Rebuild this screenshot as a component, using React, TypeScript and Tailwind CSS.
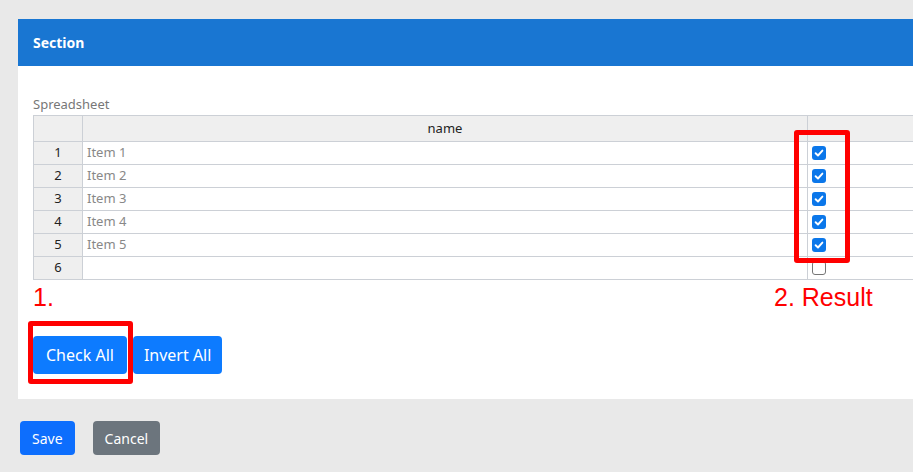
import React from 'react';

const ROWS = [
  { id: 1, name: 'Item 1', checked: true },
  { id: 2, name: 'Item 2', checked: true },
  { id: 3, name: 'Item 3', checked: true },
  { id: 4, name: 'Item 4', checked: true },
  { id: 5, name: 'Item 5', checked: true },
  { id: 6, name: '', checked: false },
];

const Check = ({ checked }: { checked: boolean }) =>
  checked ? (
    <span className="flex h-[14px] w-[14px] items-center justify-center rounded-[3px] bg-[#0b77ea]">
      <svg width="10" height="10" viewBox="0 0 10 10">
        <path d="M1.6 5.2 L4 7.5 L8.4 2.6" fill="none" stroke="white" strokeWidth="1.9" strokeLinecap="round" strokeLinejoin="round" />
      </svg>
    </span>
  ) : (
    <span className="block h-[14px] w-[14px] rounded-[3px] border border-[#767676] bg-white" />
  );

export default function App() {
  return (
    <div
      className="relative h-[472px] w-[913px] overflow-hidden bg-[#e9e9e9]"
      style={{ fontFamily: '"Noto Sans", sans-serif' }}
    >
      <div className="pt-[19px] pl-[18px]">
        {/* Section panel */}
        <div className="w-[940px] bg-white">
          <div className="flex h-[47px] items-center bg-[#1976d2] px-[15px] text-[14px] font-bold text-white">
            Section
          </div>
          <div className="px-[15px] pt-[28px] pb-[25px]">
            <div className="h-[21px] text-[13px] leading-[21px] text-[#777]">Spreadsheet</div>
            <table className="w-[900px] table-fixed border-collapse text-[13px]">
              <colgroup>
                <col className="w-[49px]" />
                <col className="w-[725px]" />
                <col />
              </colgroup>
              <thead>
                <tr className="h-[26px] bg-[#efefef]">
                  <th className="border border-[#ccd0d6] font-normal" />
                  <th className="border border-[#ccd0d6] font-normal text-[#222]">name</th>
                  <th className="border border-[#ccd0d6] font-normal" />
                </tr>
              </thead>
              <tbody>
                {ROWS.map((r) => (
                  <tr key={r.id} className="h-[23px]">
                    <td className="border border-[#ccd0d6] bg-[#efefef] text-center text-[#222]">{r.id}</td>
                    <td className="border border-[#ccd0d6] px-[4px] text-[#888]">{r.name}</td>
                    <td className="border border-[#ccd0d6] pl-[4px]">
                      <Check checked={r.checked} />
                    </td>
                  </tr>
                ))}
              </tbody>
            </table>
            <div className="h-[56px]" />
            <div className="flex">
              <button className="h-[38px] rounded-[4px] bg-[#0d7bff] px-[13px] text-[16px] text-white">Check All</button>
              <button className="ml-[6px] h-[38px] rounded-[4px] bg-[#0d7bff] px-[11px] text-[16px] text-white">Invert All</button>
            </div>
          </div>
        </div>
        {/* Form actions */}
        <div className="mt-[22px] flex gap-[18px] pl-[2px]">
          <button className="h-[34px] rounded-[4px] bg-[#0d6efd] px-[12px] text-[14px] text-white">Save</button>
          <button className="h-[34px] rounded-[4px] bg-[#6c757d] px-[12px] text-[14px] text-white">Cancel</button>
        </div>
      </div>

      {/* Annotations */}
      <div
        className="pointer-events-none absolute left-[33px] top-[283px] text-[25px] leading-[29px] text-[#ff0000]"
        style={{ fontFamily: '"Liberation Sans", Arial, sans-serif' }}
      >
        1.
      </div>
      <div
        className="pointer-events-none absolute left-[774px] top-[283px] text-[25px] leading-[29px] text-[#ff0000]"
        style={{ fontFamily: '"Liberation Sans", Arial, sans-serif' }}
      >
        2. Result
      </div>
      <div className="pointer-events-none absolute left-[794px] top-[130px] h-[133px] w-[56px] rounded-[3px] border-[5px] border-[#ff0000]" />
      <div className="pointer-events-none absolute left-[28px] top-[321px] h-[63px] w-[105px] rounded-[3px] border-[5px] border-[#ff0000]" />
    </div>
  );
}
